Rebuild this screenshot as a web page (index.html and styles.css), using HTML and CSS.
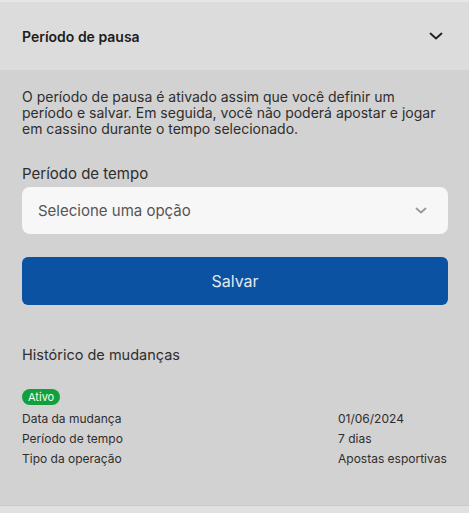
FILE: index.html
```html
<!DOCTYPE html>
<html lang="pt-BR">
<head>
<meta charset="utf-8">
<link rel="stylesheet" href="styles.css">
</head>
<body>
<div class="panel">
  <div class="topstrip"></div>
  <div class="header">
    <span class="title">Período de pausa</span>
    <svg class="chev" width="14" height="8" viewBox="0 0 14 8"><path d="M1.5 1.5 L7 6.5 L12.5 1.5" fill="none" stroke="#1f1f1f" stroke-width="1.8" stroke-linecap="round" stroke-linejoin="round"/></svg>
  </div>
  <div class="content">
    <p class="desc">O período de pausa é ativado assim que você definir um período e salvar. Em seguida, você não poderá apostar e jogar em cassino durante o tempo selecionado.</p>
    <div class="label">Período de tempo</div>
    <div class="select">
      <span>Selecione uma opção</span>
      <svg width="12" height="8" viewBox="0 0 12 8"><path d="M1.5 1.5 L6 5.5 L10.5 1.5" fill="none" stroke="#9a9a9a" stroke-width="1.8" stroke-linecap="round" stroke-linejoin="round"/></svg>
    </div>
    <div class="button">Salvar</div>
    <div class="history-title">Histórico de mudanças</div>
    <span class="badge">Ativo</span>
    <div class="rows">
      <span>Data da mudança</span><span>01/06/2024</span>
      <span>Período de tempo</span><span>7 dias</span>
      <span>Tipo da operação</span><span>Apostas esportivas</span>
    </div>
  </div>
  <div class="bottomstrip"></div>
</div>
</body>
</html>
```
FILE: styles.css
```css
* { box-sizing: border-box; }
html, body { margin: 0; padding: 0; }
body {
  font-family: Inter, "Noto Sans", sans-serif;
  background: #d2d2d2;
  color: #2a2a2a;
}
.panel { width: 469px; height: 513px; display: flex; flex-direction: column; }
.topstrip { height: 2px; background: #e6e6e6; }
.header {
  height: 68px;
  background: #dcdcdc;
  display: flex;
  align-items: center;
  justify-content: space-between;
  padding: 0 26px 0 22px;
}
.title { font-size: 14px; font-weight: 600; color: #1c1c1c; }
.content {
  flex: 1;
  background: #d2d2d2;
  padding: 19px 21px 0 22px;
  display: flex;
  flex-direction: column;
}
.desc { margin: 0; font-size: 14px; line-height: 16px; color: #2e2e2e; }
.label { margin-top: 29px; font-size: 15px; line-height: 16px; color: #2e2e2e; }
.select {
  margin-top: 5px;
  height: 47px;
  background: #f7f7f7;
  border-radius: 8px;
  display: flex;
  align-items: center;
  justify-content: space-between;
  padding: 0 21px 0 16px;
  font-size: 15px;
  color: #555;
}
.button {
  margin-top: 23px;
  height: 48px;
  background: #0c52a3;
  border-radius: 6px;
  display: flex;
  align-items: center;
  justify-content: center;
  font-size: 16px;
  color: #e3e8f1;
}
.history-title { margin-top: 41px; font-size: 14.5px; line-height: 18px; color: #2e2e2e; }
.badge {
  align-self: flex-start;
  margin-top: 25px;
  background: #12a03c;
  color: #f0fff3;
  font-size: 11px;
  line-height: 16px;
  padding: 0 6px;
  border-radius: 8px;
}
.rows {
  margin-top: 4px;
  display: grid;
  grid-template-columns: 316px 1fr;
  font-size: 12px;
  line-height: 20px;
  color: #2e2e2e;
}
.bottomstrip { height: 8px; background: #e0e0e0; border-top: 1px solid #cacaca; }
```
